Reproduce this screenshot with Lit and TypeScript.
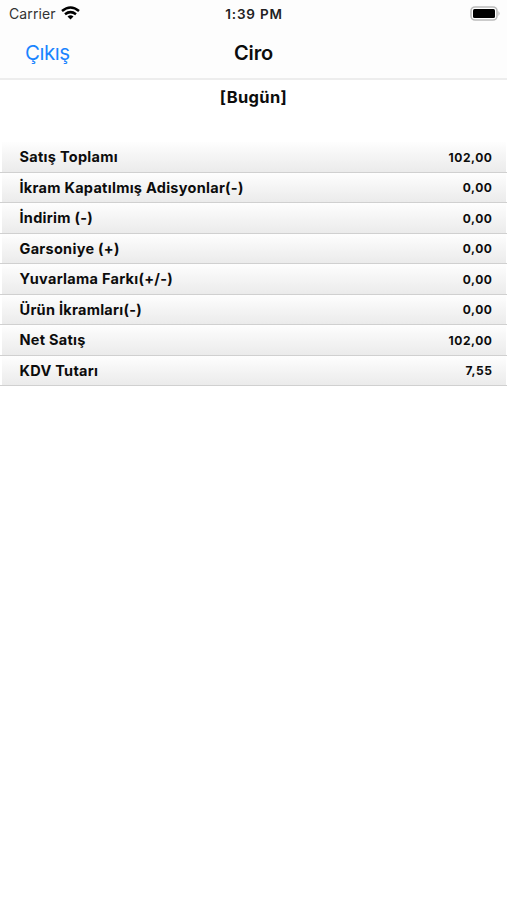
import { LitElement, html, css } from "lit";
import { customElement } from "lit/decorators.js";

const rows: [string, string][] = [
  ["Satış Toplamı", "102,00"],
  ["İkram Kapatılmış Adisyonlar(-)", "0,00"],
  ["İndirim (-)", "0,00"],
  ["Garsoniye (+)", "0,00"],
  ["Yuvarlama Farkı(+/-)", "0,00"],
  ["Ürün İkramları(-)", "0,00"],
  ["Net Satış", "102,00"],
  ["KDV Tutarı", "7,55"],
];

@customElement("app-root")
export class AppRoot extends LitElement {
  static styles = css`
    :host { display: block; height: 900px; background: #fff; color: #0c0c0c; font-family: Inter, "Liberation Sans", sans-serif; overflow: hidden; }
    .status { display: grid; grid-template-columns: 1fr auto 1fr; align-items: center; height: 27px; box-sizing: border-box; padding: 0 7px 0 9px; font-size: 14px; background: #fdfdfd; }
    .carrier { display: flex; align-items: center; gap: 5px; color: #333; letter-spacing: 0.1px; }
    .wifi { display: block; margin-top: -2px; }
    .time { font-weight: 600; font-size: 13.5px; letter-spacing: 0.8px; margin-left: -1px; color: #222; }
    .battery { justify-self: end; display: block; margin-top: -1px; }
    .nav { display: grid; grid-template-columns: 1fr auto 1fr; align-items: center; height: 51px; padding: 0 25px; border-bottom: 2px solid #ededed; background: #fdfdfd; }
    .exit { color: #1a84ff; font-size: 20.5px; letter-spacing: -0.45px; }
    .title { font-weight: 600; font-size: 20px; letter-spacing: -0.1px; }
    .period { height: 62px; line-height: 34px; text-align: center; font-weight: 700; font-size: 16.5px; letter-spacing: 0.35px; }
    .row { display: flex; justify-content: space-between; align-items: center; height: 30.5px; box-sizing: border-box; padding: 0 15px 0 19.5px; border-bottom: 1px solid #d0d0d0; background: linear-gradient(#fefefe, #f7f7f7 35%, #ebebeb) 2px 0 / calc(100% - 3px) 100% no-repeat; font-weight: 700; font-size: 14.5px; letter-spacing: 0.28px; }
    .amount { font-size: 12px; letter-spacing: 0.55px; margin-right: -0.5px; padding-top: 1px; }
  `;
  render() {
    return html`
      <div class="status">
        <div class="carrier"><span>Carrier</span>
          <svg class="wifi" width="19" height="14" viewBox="0 0 19 14" fill="none" stroke="#000" stroke-width="2.5"><path d="M1 5Q9.500-2 18 5M4 8.300Q9.500 4 15 8.300"/><path d="M6.500 10.500Q9.500 8.200 12.500 10.500L9.500 13.500Z" fill="#000" stroke="none"/></svg>
        </div>
        <span class="time">1:39 PM</span>
        <svg class="battery" width="30" height="15" viewBox="0 0 30 15"><rect x="1" y="1" width="26" height="13" rx="4" fill="#fff" stroke="#bbb" stroke-width="1.600"/><rect x="3" y="3" width="22" height="9" rx="1.500"/><path d="M28.500 5q2 2.500 0 5z" fill="#aaa"/></svg>
      </div>
      <div class="nav"><span class="exit">Çıkış</span><span class="title">Ciro</span></div>
      <div class="period">[Bugün]</div>
      <div>${rows.map(([l, a]) => html`<div class="row"><span>${l}</span><span class="amount">${a}</span></div>`)}</div>
    `;
  }
}
